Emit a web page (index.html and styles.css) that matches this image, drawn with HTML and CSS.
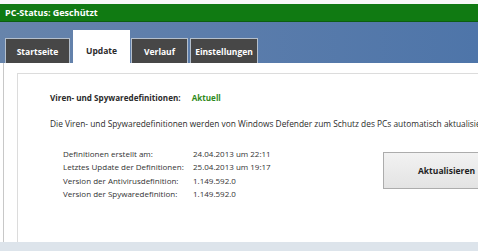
FILE: index.html
```html
<!DOCTYPE html>
<html lang="de">
<head>
<meta charset="utf-8">
<title>Windows Defender – Update</title>
<link rel="stylesheet" href="styles.css">
</head>
<body>
<div class="window">
  <div class="topgap"></div>
  <div class="statusbar">PC-Status: Geschützt</div>
  <div class="tabband">
    <div class="tab tab-start">Startseite</div>
    <div class="tab tab-active tab-update">Update</div>
    <div class="tab tab-verlauf">Verlauf</div>
    <div class="tab tab-einst">Einstellungen</div>
  </div>
  <div class="content">
    <div class="panel">
      <div class="status-line">
        <span class="status-label">Viren- und Spywaredefinitionen:</span>
        <span class="status-value">Aktuell</span>
      </div>
      <div class="description">Die Viren- und Spywaredefinitionen werden von Windows Defender zum Schutz des PCs automatisch aktualisiert.</div>
      <div class="details">
        <div class="info-grid">
          <div class="info-label">Definitionen erstellt am:</div>
          <div class="info-value">24.04.2013 um 22:11</div>
          <div class="info-label">Letztes Update der Definitionen:</div>
          <div class="info-value">25.04.2013 um 19:17</div>
          <div class="info-label">Version der Antivirusdefinition:</div>
          <div class="info-value">1.149.592.0</div>
          <div class="info-label">Version der Spywaredefinition:</div>
          <div class="info-value">1.149.592.0</div>
        </div>
        <button class="update-btn" type="button">Aktualisieren</button>
      </div>
    </div>
  </div>
  <div class="footer"></div>
</div>
</body>
</html>
```
FILE: styles.css
```css
html, body {
  margin: 0;
  padding: 0;
  background: #ffffff;
}
body {
  width: 478px;
  height: 251px;
  overflow: hidden;
  font-family: "Open Sans", "Noto Sans", sans-serif;
  font-size: 8.1px;
  color: #2b2b2b;
}
.window {
  width: 478px;
  height: 251px;
  display: flex;
  flex-direction: column;
  overflow: hidden;
}
.topgap {
  height: 4px;
  background: #f7f9f7;
}
.statusbar {
  height: 18px;
  line-height: 17px;
  padding-left: 5px;
  background: #107a12;
  border-bottom: 1px solid #0c5e10;
  box-sizing: border-box;
  color: #ffffff;
  font-weight: 700;
  font-size: 9px;
}
.tabband {
  height: 41px;
  display: flex;
  align-items: flex-end;
  padding-left: 5px;
  background: linear-gradient(to right, #6784ab, #5a7cab 50%, #4e75a9);
  box-sizing: border-box;
}
.tab {
  height: 25px;
  box-sizing: border-box;
  display: flex;
  align-items: center;
  justify-content: center;
  background: #474747;
  color: #ffffff;
  font-weight: 700;
  font-size: 8.5px;
  border: 1px solid #b4bfcc;
  border-bottom: none;
}
.tab-start { width: 65px; }
.tab-update { width: 57px; margin-left: 3px; }
.tab-verlauf { width: 57px; margin-left: 1px; }
.tab-einst { width: 68px; margin-left: 2px; }
.tab-active {
  height: 33px;
  background: #ffffff;
  color: #2b2b2b;
  border-color: #ffffff;
  padding-top: 6px;
}
.content {
  height: 179px;
  margin-left: 3px;
  border-left: 1px solid #c8c8c8;
  background: #ffffff;
  padding: 10px 0 0 13px;
  box-sizing: border-box;
  display: flex;
}
.panel {
  flex: 1;
  border: 1px solid #dcdcdc;
  border-right: none;
  border-bottom: none;
  padding: 18px 0 0 32px;
  white-space: nowrap;
  overflow: hidden;
}
.status-line {
  height: 12px;
  line-height: 12px;
  font-weight: 700;
}
.status-value {
  color: #2f8a1c;
  margin-left: 9px;
}
.description {
  margin-top: 14px;
  height: 12px;
  line-height: 12px;
  font-size: 8.35px;
}
.details {
  display: flex;
  align-items: flex-start;
  margin-top: 17px;
  padding-left: 13px;
}
.info-grid {
  display: grid;
  grid-template-columns: 130px 190px;
  grid-auto-rows: 13.4px;
  line-height: 13.4px;
  font-size: 8px;
  color: #333333;
}
.update-btn {
  margin-top: 5px;
  width: 127px;
  height: 37px;
  flex: none;
  background: linear-gradient(#f2f2f2, #e3e3e3);
  border: 1px solid #acacac;
  font-family: inherit;
  font-size: 8.5px;
  font-weight: 700;
  color: #1e1e1e;
  padding: 0;
}
.footer {
  flex: 1;
  background: #dde4eb;
}
```
